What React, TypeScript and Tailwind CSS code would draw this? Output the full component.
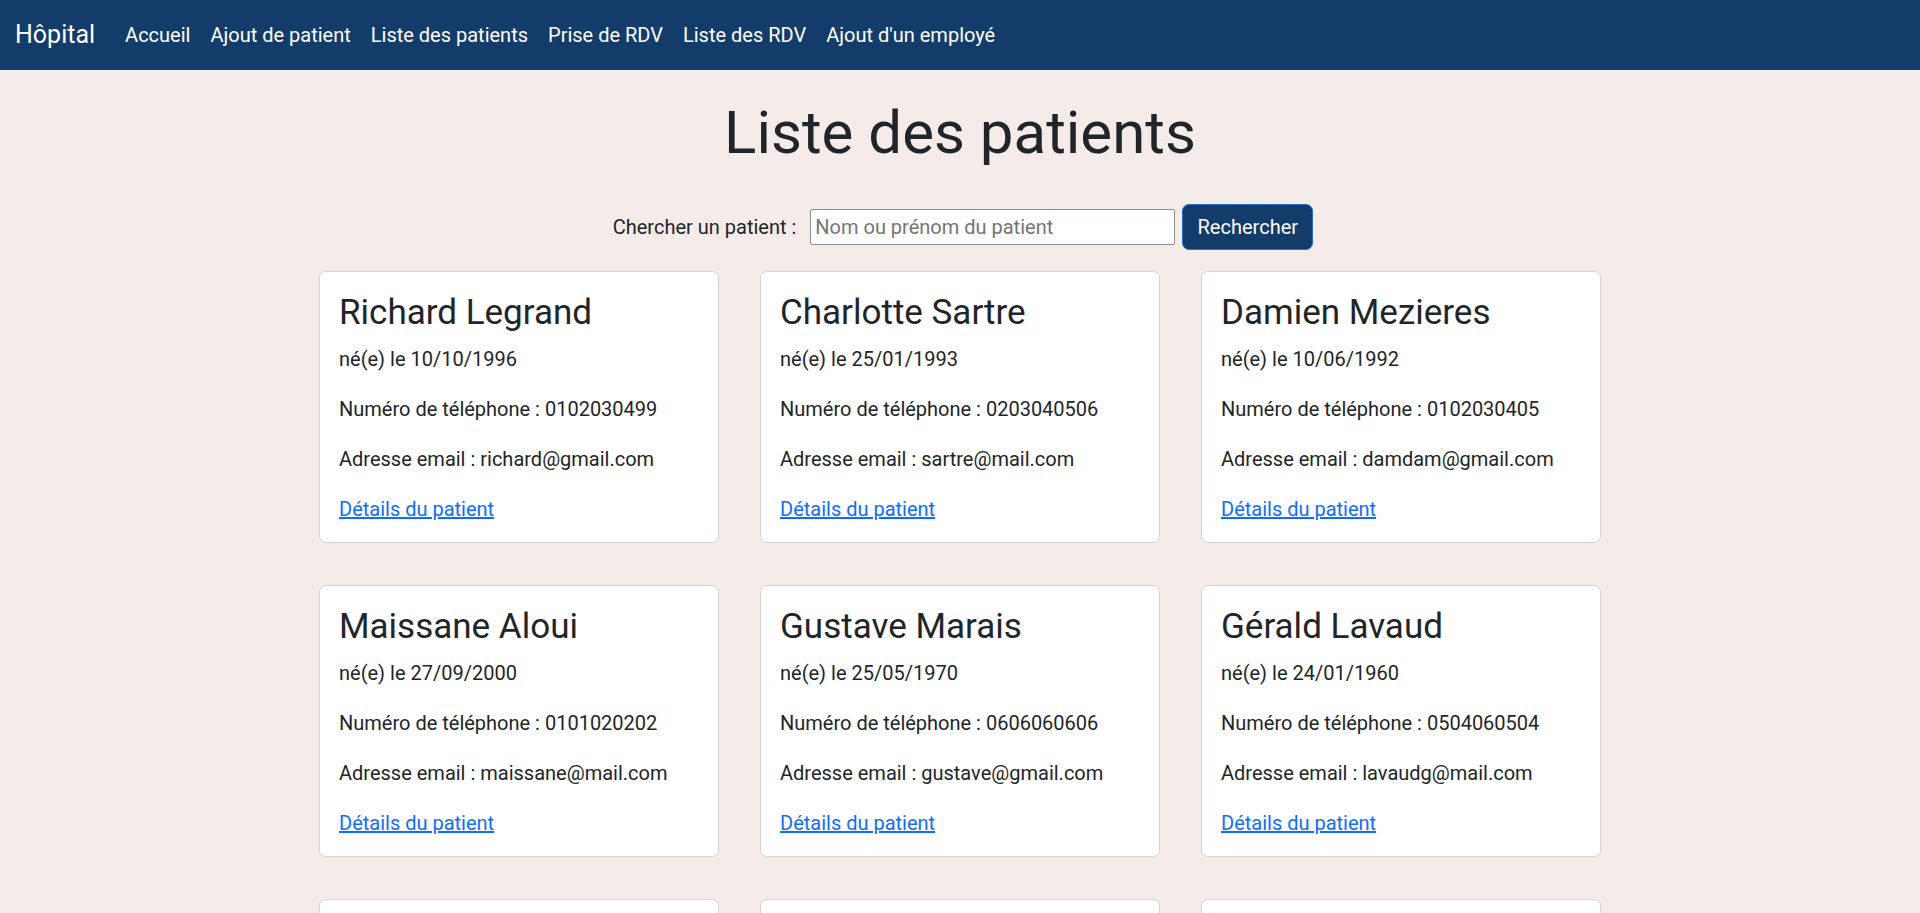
import { useState } from "react";

type Patient = {
  id: number;
  nom: string;
  naissance: string;
  tel: string;
  email: string;
};

const patients: Patient[] = [
  { id: 1, nom: "Richard Legrand", naissance: "10/10/1996", tel: "0102030499", email: "richard@gmail.com" },
  { id: 2, nom: "Charlotte Sartre", naissance: "25/01/1993", tel: "0203040506", email: "sartre@mail.com" },
  { id: 3, nom: "Damien Mezieres", naissance: "10/06/1992", tel: "0102030405", email: "damdam@gmail.com" },
  { id: 4, nom: "Maissane Aloui", naissance: "27/09/2000", tel: "0101020202", email: "maissane@mail.com" },
  { id: 5, nom: "Gustave Marais", naissance: "25/05/1970", tel: "0606060606", email: "gustave@gmail.com" },
  { id: 6, nom: "Gérald Lavaud", naissance: "24/01/1960", tel: "0504060504", email: "lavaudg@mail.com" },
  { id: 7, nom: "Lucie Bernard", naissance: "12/03/1985", tel: "0607080910", email: "lucie@gmail.com" },
  { id: 8, nom: "Antoine Dubois", naissance: "08/11/1978", tel: "0708091011", email: "adubois@mail.com" },
  { id: 9, nom: "Sophie Martin", naissance: "19/07/1999", tel: "0611223344", email: "sophie@gmail.com" },
];

const liens = [
  "Accueil",
  "Ajout de patient",
  "Liste des patients",
  "Prise de RDV",
  "Liste des RDV",
  "Ajout d'un employé",
];

function Navbar() {
  return (
    <nav className="flex h-[70px] items-center bg-[#133c6a] pl-[15px] text-white">
      <a href="#" className="mr-[20px] text-[25px] leading-[1.5]">
        Hôpital
      </a>
      <ul className="flex items-center">
        {liens.map((l) => (
          <li key={l}>
            <a href="#" className="block px-[10px] text-[20px] leading-[30px] text-white">
              {l}
            </a>
          </li>
        ))}
      </ul>
    </nav>
  );
}

function PatientCard({ p }: { p: Patient }) {
  return (
    <div className="rounded-[7px] border border-[#d6d3d2] bg-white px-[19px] pt-[20px] pb-[18px] text-[#212529]">
      <h2 className="mb-[10px] text-[35px] leading-[1.2] font-normal">{p.nom}</h2>
      <p className="mb-[20px] text-[20px] leading-[30px]">né(e) le {p.naissance}</p>
      <p className="mb-[20px] text-[20px] leading-[30px]">Numéro de téléphone : {p.tel}</p>
      <p className="mb-[20px] text-[20px] leading-[30px]">Adresse email : {p.email}</p>
      <a href="#" className="block text-[20px] leading-[30px] text-[#0d6efd] underline">
        Détails du patient
      </a>
    </div>
  );
}

export default function App() {
  const [q, setQ] = useState("");

  const visibles = patients.filter((p) =>
    p.nom.toLowerCase().includes(q.trim().toLowerCase())
  );

  return (
    <div className="min-h-screen bg-[#f5ece9] font-['Roboto',sans-serif]">
      <Navbar />
      <main className="pb-10">
        <h1 className="mt-[27px] text-center text-[60px] leading-[72px] font-normal text-[#212529]">
          Liste des patients
        </h1>

        <form
          className="mt-[35px] flex items-center justify-center pl-[6px]"
          onSubmit={(e) => e.preventDefault()}
        >
          <label htmlFor="recherche" className="mr-[14px] text-[20px] leading-[30px] text-[#212529]">
            Chercher un patient :
          </label>
          <input
            id="recherche"
            type="text"
            value={q}
            onChange={(e) => setQ(e.target.value)}
            placeholder="Nom ou prénom du patient"
            className="h-[36px] w-[365px] rounded-[2px] border border-[#8f8f8f] bg-white px-[4px] text-[20px] text-[#212529] placeholder:text-[#757575] outline-none"
          />
          <button
            type="submit"
            className="ml-[7px] h-[46px] w-[131px] rounded-[7px] border-[1.5px] border-[#1f6fd1] bg-[#133c6a] text-[20px] text-white"
          >
            Rechercher
          </button>
        </form>

        <div className="mt-[21px] grid grid-cols-[repeat(3,400px)] justify-center gap-x-[41px] gap-y-[42px]">
          {visibles.map((p) => (
            <PatientCard key={p.id} p={p} />
          ))}
        </div>
      </main>
    </div>
  );
}
